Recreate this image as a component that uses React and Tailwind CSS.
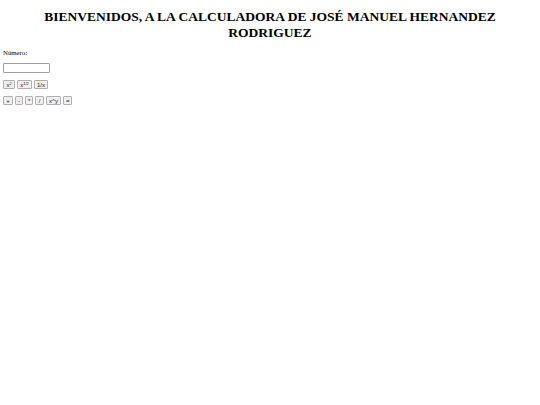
import React, { useState } from "react";

const btn =
  "h-[9px] px-[2px] text-[6px] leading-none border border-[#b0b0b0] rounded-[1px] bg-[#efefef] text-[#222] font-['Liberation_Sans',sans-serif]";

export default function App() {
  const [num, setNum] = useState("");

  return (
    <div className="min-h-[405px] w-[540px] bg-white px-[3px] text-black font-['Liberation_Serif',serif]">
      <h1 className="pt-[9px] text-center text-[13.5px] font-bold leading-[15.5px]">
        BIENVENIDOS, A LA CALCULADORA DE JOSÉ MANUEL HERNANDEZ RODRIGUEZ
      </h1>
      <p className="mt-[9px] text-[6.8px] leading-[8px]">Número:</p>
      <div className="mt-[6px] flex">
        <input
          value={num}
          onChange={(e) => setNum(e.target.value)}
          className="h-[10px] w-[47px] border border-[#a0a0a0] rounded-[1px] bg-white text-[5.5px]"
        />
      </div>
      <div className="mt-[7px] flex gap-[2px]">
        <button className={`${btn} w-[12px]`}>
          x<sup className="text-[4px]">2</sup>
        </button>
        <button className={`${btn} w-[15px]`}>
          x<sup className="text-[4px]">1/2</sup>
        </button>
        <button className={`${btn} w-[14px]`}>1/x</button>
      </div>
      <div className="mt-[7px] flex gap-[2px]">
        <button className={`${btn} w-[10px] h-[8px]`}>+</button>
        <button className={`${btn} w-[8px] h-[8px]`}>-</button>
        <button className={`${btn} w-[8px] h-[8px]`}>*</button>
        <button className={`${btn} w-[9px] h-[8px]`}>/</button>
        <button className={`${btn} w-[15px] h-[8px]`}>x^y</button>
        <button className={`${btn} w-[9px] h-[8px]`}>=</button>
      </div>
    </div>
  );
}
